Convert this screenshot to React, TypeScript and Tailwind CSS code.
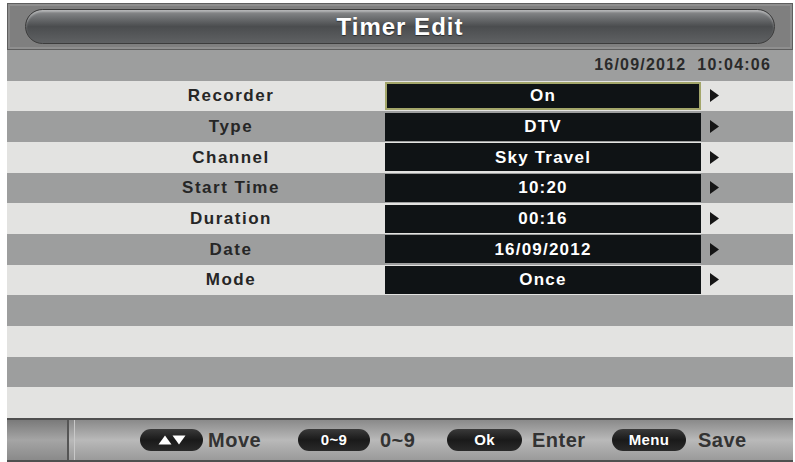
const font = { fontFamily: '"Liberation Sans", Arial, sans-serif' };

type Row = { label: string; value: string; selected?: boolean };

const rows: Row[] = [
  { label: "Recorder", value: "On", selected: true },
  { label: "Type", value: "DTV" },
  { label: "Channel", value: "Sky Travel" },
  { label: "Start Time", value: "10:20" },
  { label: "Duration", value: "00:16" },
  { label: "Date", value: "16/09/2012" },
  { label: "Mode", value: "Once" },
];

function Arrow() {
  return (
    <svg width="10" height="13" viewBox="0 0 10 13" className="ml-[8px]">
      <path d="M1 0 L10 6.5 L1 13 Z" fill="#151515" />
    </svg>
  );
}

function UpDown() {
  return (
    <svg width="28" height="10" viewBox="0 0 28 10">
      <path d="M0.5 9.5 L7 0.5 L13.5 9.5 Z" fill="#fff" />
      <path d="M14.5 0.5 L27.5 0.5 L21 9.5 Z" fill="#fff" />
    </svg>
  );
}

function Key({ children, w }: { children: React.ReactNode; w: string }) {
  return (
    <div
      className={`flex h-[22px] shrink-0 ${w} items-center justify-center rounded-full bg-gradient-to-b from-[#3a3a3a] via-[#1a1a1a] to-[#2a2a2a] text-[15px] font-bold tracking-[0.3px] text-white`}
    >
      {children}
    </div>
  );
}

export default function App() {
  return (
    <div className="h-[462px] w-[795px] bg-white pt-[3px] pl-[7px] pr-[2px]" style={font}>
      <div className="flex h-[459px] flex-col">
        {/* header */}
        <div className="flex h-[47px] items-center border border-[#5e5e5e] bg-[#7f7f7f] px-[17px] shadow-[inset_0_0_0_2px_#8f8f8f]">
          <div className="flex h-[35px] flex-1 items-center justify-center rounded-full border border-[#3c3c3c] bg-gradient-to-b from-[#8e9092] via-[#4b4d4f] to-[#5f6163] shadow-[inset_0_2px_2px_rgba(255,255,255,0.35)]">
            <span className="text-[24px] font-bold tracking-[1px] text-white [text-shadow:0_1px_1px_rgba(0,0,0,0.5)]">
              Timer Edit
            </span>
          </div>
        </div>

        {/* date row */}
        <div className="flex h-[30.67px] items-center justify-end bg-[#9d9e9e] pr-[22px] text-[16px] font-bold tracking-[1.2px] text-[#2a2a2a]">
          <span>16/09/2012</span>
          <span className="ml-[11px]">10:04:06</span>
        </div>

        {rows.map((r, i) => (
          <div
            key={r.label}
            className={`flex h-[30.67px] items-center ${i % 2 === 0 ? "bg-[#e3e3e1]" : "bg-[#9d9e9e]"}`}
          >
            <div className="w-[378px] pl-[70px] text-center text-[17px] font-bold tracking-[1.5px] text-[#262626]">
              {r.label}
            </div>
            <div
              className={`flex h-[28px] w-[316px] items-center justify-center bg-[#0f1315] text-[17px] font-bold tracking-[1.2px] text-white ${
                r.selected ? "border-2 border-[#a3a66a]" : ""
              }`}
            >
              {r.value}
            </div>
            <Arrow />
          </div>
        ))}

        {[0, 1, 2, 3].map((i) => (
          <div
            key={i}
            className={`h-[30.67px] ${i % 2 === 0 ? "bg-[#9d9e9e]" : "bg-[#e3e3e1]"}`}
          />
        ))}

        {/* footer */}
        <div className="flex flex-1 border-y-2 border-[#4f4f4f] bg-gradient-to-b from-[#8a8a8a] via-[#b9b9b9] to-[#9a9a9a]">
          <div className="w-[62px] border-r-2 border-[#555] bg-gradient-to-b from-[#7a7a7a] via-[#a5a5a5] to-[#8a8a8a]" />
          <div className="ml-[5px] w-px bg-[#c8c8c8]" />
          <div className="flex flex-1 items-center pl-[65px] text-[20px] font-bold tracking-[0.5px] text-[#333]">
            <Key w="w-[63px]">
              <UpDown />
            </Key>
            <span className="ml-[5px] w-[54px]">Move</span>
            <div className="ml-[36px]">
              <Key w="w-[72px]">0~9</Key>
            </div>
            <span className="ml-[10px] w-[38px]">0~9</span>
            <div className="ml-[29px]">
              <Key w="w-[75px]">Ok</Key>
            </div>
            <span className="ml-[10px] w-[53px]">Enter</span>
            <div className="ml-[27px]">
              <Key w="w-[74px]">Menu</Key>
            </div>
            <span className="ml-[12px]">Save</span>
          </div>
        </div>
      </div>
    </div>
  );
}
